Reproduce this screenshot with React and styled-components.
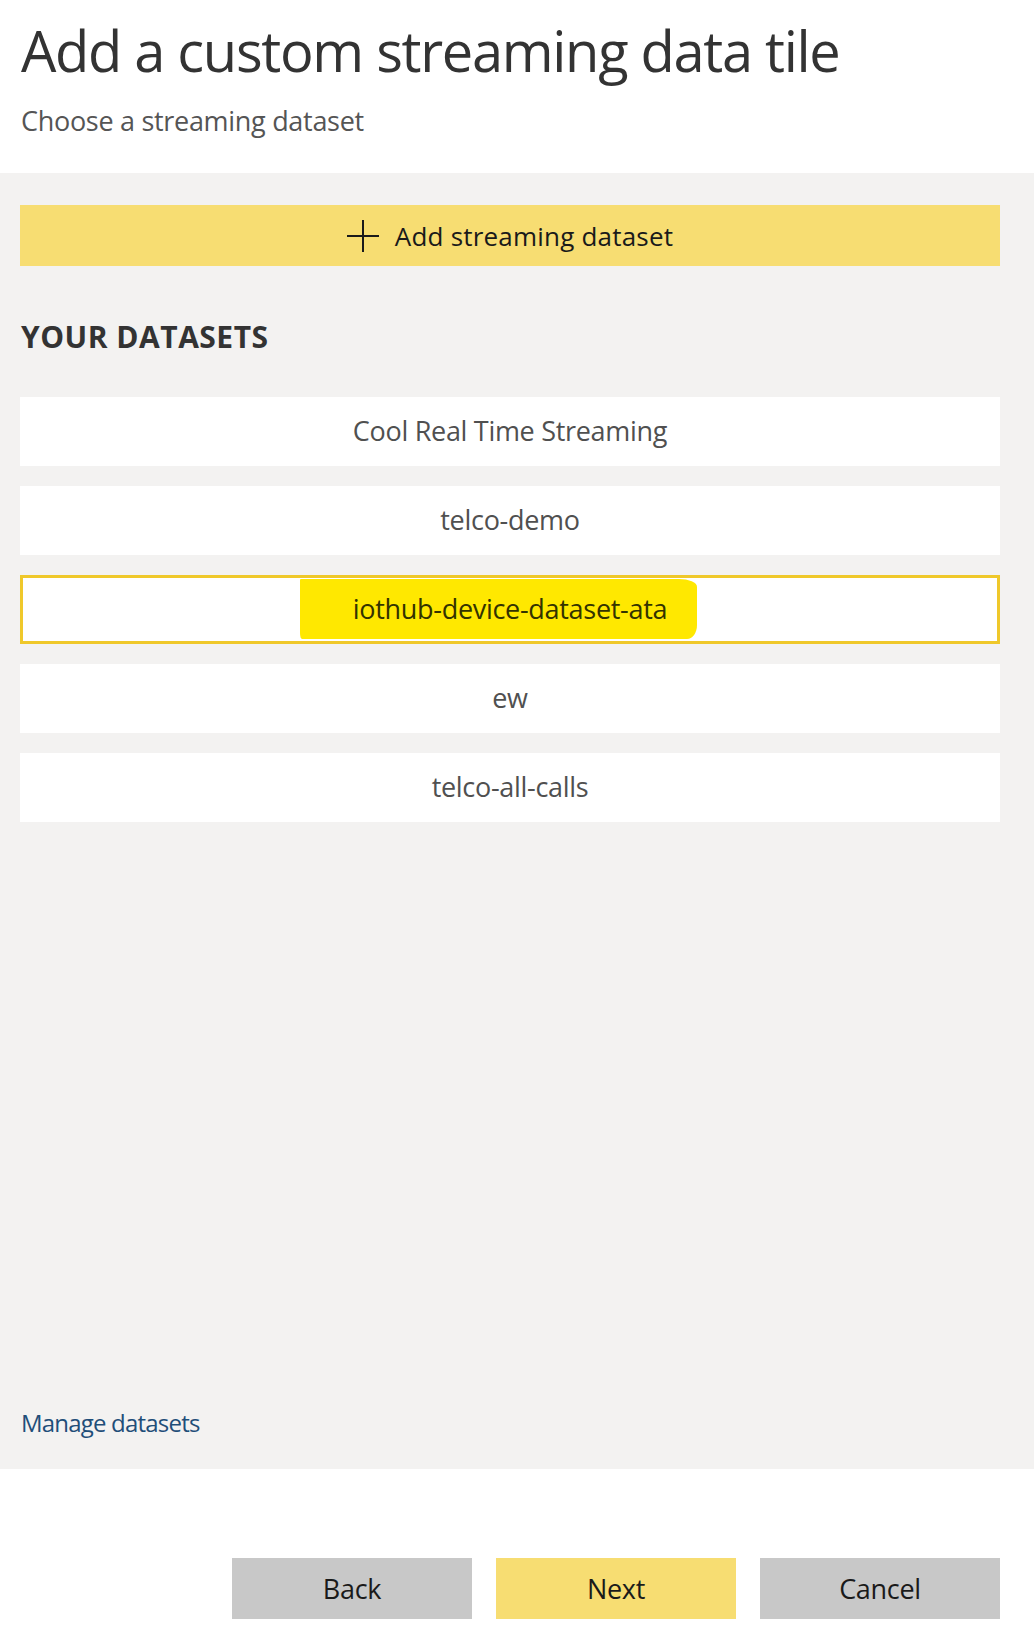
import React from 'react';
import styled, { createGlobalStyle } from 'styled-components';

const GlobalStyle = createGlobalStyle`
    body {
        margin: 0;
        background: #ffffff;
        font-family: "Open Sans", "Liberation Sans", sans-serif;
    }
`;

const Page = styled.div`
    width: 1034px;
    min-height: 1638px;
    display: flex;
    flex-direction: column;
    background: #ffffff;
`;

const Header = styled.header`
    height: 173px;
    box-sizing: border-box;
    padding: 16px 34px 0 21px;
`;

const Title = styled.h1`
    margin: 0;
    color: #333333;
    font-size: 56px;
    font-weight: 400;
    line-height: 68px;
    letter-spacing: -1.3px;
`;

const Subtitle = styled.p`
    margin: 19px 0 0;
    color: #555555;
    font-size: 27px;
    line-height: 36px;
    letter-spacing: -0.3px;
`;

const Body = styled.section`
    height: 1296px;
    box-sizing: border-box;
    padding: 32px 34px 30px 20px;
    background: #f3f2f1;
    display: flex;
    flex-direction: column;
`;

const AddButton = styled.button`
    height: 61px;
    border: none;
    background: #f7dd72;
    display: flex;
    align-items: center;
    justify-content: center;
    gap: 16px;
    padding: 0;
    color: #1a1a1a;
    font-family: inherit;
    font-size: 26px;
    letter-spacing: 0.2px;
    cursor: pointer;
`;

const SectionTitle = styled.h2`
    margin: 53px 0 42px 1px;
    color: #333333;
    font-size: 30px;
    font-weight: 700;
    line-height: 36px;
    letter-spacing: 0.5px;
`;

const List = styled.ul`
    list-style: none;
    margin: 0;
    padding: 0;
    display: flex;
    flex-direction: column;
    gap: 20px;
`;

const Item = styled.li`
    height: 69px;
    box-sizing: border-box;
    background: #ffffff;
    border: ${p => (p.selected ? '3px solid #efc82a' : 'none')};
    display: flex;
    align-items: center;
    justify-content: center;
    color: #505050;
    font-size: 27px;
    letter-spacing: -0.3px;
    padding-bottom: 2px;
    cursor: pointer;
`;

// hand-drawn highlighter stroke over the selected dataset name
const Marker = styled.span`
    background: #ffe800;
    color: #333300;
    padding: 11px 30px 12px 53px;
    margin-left: -23px;
    border-radius: 1px 18px 10px 2px / 1px 8px 14px 6px;
`;

const ManageLink = styled.a`
    margin-top: auto;
    margin-left: 1px;
    color: #1f4e79;
    font-size: 24px;
    line-height: 32px;
    letter-spacing: -0.8px;
    text-decoration: none;
`;

const Footer = styled.footer`
    display: flex;
    justify-content: flex-end;
    gap: 24px;
    padding: 89px 34px 19px 0;
`;

const FooterButton = styled.button`
    width: 240px;
    height: 61px;
    border: none;
    background: ${p => (p.primary ? '#f7dd72' : '#c8c8c8')};
    color: #1a1a1a;
    font-family: inherit;
    font-size: 27px;
    letter-spacing: -0.3px;
    cursor: pointer;
`;

const PlusIcon = () => (
    <svg width="32" height="32" viewBox="0 0 32 32" fill="none" stroke="#1a1a1a" strokeWidth="2">
        <line x1="16" y1="0" x2="16" y2="32" />
        <line x1="0" y1="16" x2="32" y2="16" />
    </svg>
);

const datasets = [
    'Cool Real Time Streaming',
    'telco-demo',
    'iothub-device-dataset-ata',
    'ew',
    'telco-all-calls',
];

const App = () => (
    <Page>
        <GlobalStyle />
        <Header>
            <Title>Add a custom streaming data tile</Title>
            <Subtitle>Choose a streaming dataset</Subtitle>
        </Header>
        <Body>
            <AddButton>
                <PlusIcon />
                Add streaming dataset
            </AddButton>
            <SectionTitle>YOUR DATASETS</SectionTitle>
            <List>
                {datasets.map(name =>
                    name === 'iothub-device-dataset-ata' ? (
                        <Item key={name} selected>
                            <Marker>{name}</Marker>
                        </Item>
                    ) : (
                        <Item key={name}>{name}</Item>
                    )
                )}
            </List>
            <ManageLink href="#">Manage datasets</ManageLink>
        </Body>
        <Footer>
            <FooterButton>Back</FooterButton>
            <FooterButton primary>Next</FooterButton>
            <FooterButton>Cancel</FooterButton>
        </Footer>
    </Page>
);

export default App;
